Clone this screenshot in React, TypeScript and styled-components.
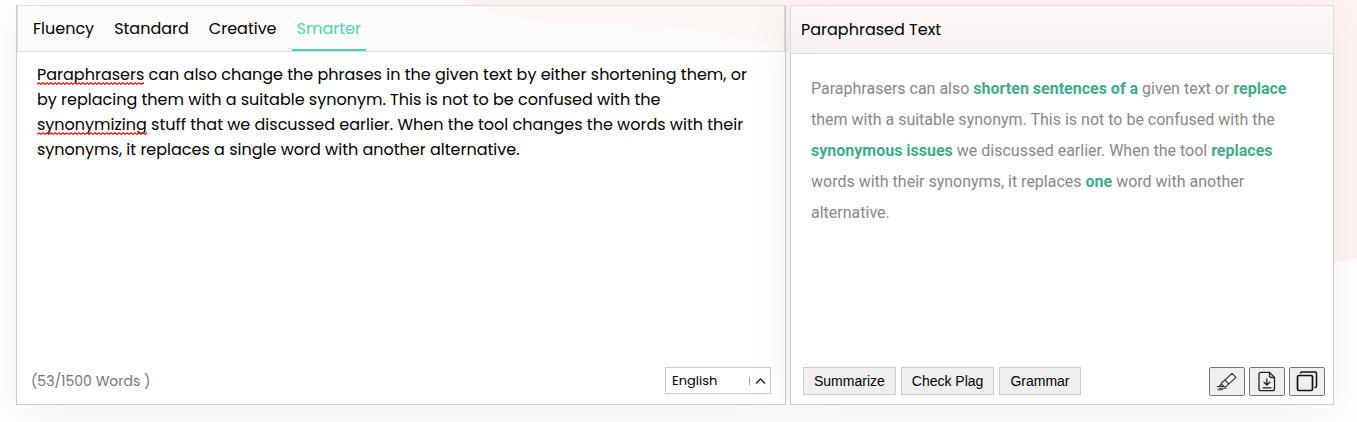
import React, { useState } from "react";
import styled, { createGlobalStyle } from "styled-components";

const GlobalStyle = createGlobalStyle`
  * { box-sizing: border-box; }
  body { margin: 0; background: #fff; color: #000; font-family: Poppins, Inter, sans-serif; }
  button, select, textarea { margin: 0; color: inherit; }
`;

const Page = styled.main`
  position: relative;
  min-height: 100vh;
  padding: 5px 23px 17px 16px;
  overflow: hidden;
`;

const Backdrop = styled.svg`
  position: absolute;
  top: 0;
  right: 0;
  width: 900px;
  height: 270px;
`;

const Workspace = styled.div`
  position: relative;
  display: grid;
  grid-template-columns: 770fr 544fr;
  gap: 4px;
  min-height: 400px;
`;

const Panel = styled.section`
  display: flex;
  flex-direction: column;
  min-width: 0;
  box-shadow: 0 10px 50px rgba(0, 0, 0, 0.06);
`;

const SourcePanel = styled(Panel)`
  border: 1px solid #c5cbdb;
  border-top: 0;
`;

const Header = styled.header`
  display: flex;
  border: 1px solid #dcdcdc;
  background: rgba(250, 248, 247, 0.6);
`;

const Tabs = styled(Header)`
  gap: 10px;
  height: 47px;
  padding-left: 10px;
`;

const Tab = styled.button<{ $active: boolean }>`
  height: 45px;
  padding: 0 5px;
  border: 0;
  border-bottom: 2px solid ${(p) => (p.$active ? "#3fd6ae" : "transparent")};
  background: none;
  color: ${(p) => (p.$active ? "#4cd6b0" : "#000")};
  font: 400 16px/45px Poppins, Inter, sans-serif;
  cursor: pointer;
`;

const ResultHeader = styled(Header)`
  align-items: center;
  height: 49px;
  padding: 0 10px;
  background: linear-gradient(rgba(250, 250, 250, 0.7), rgba(242, 242, 242, 0.7));
`;

const Title = styled.h2`
  margin: 0;
  font-size: 16px;
  font-weight: 400;
  line-height: 24px;
`;

const SourceBody = styled.div`
  display: flex;
  flex: 1;
  flex-direction: column;
  background: #fff;
`;

const ResultBody = styled.div`
  display: flex;
  flex: 1;
  flex-direction: column;
  border: 1px solid #c5cbdb;
  border-top: 0;
  background: #fff;
`;

const Editor = styled.div`
  position: relative;
  display: flex;
  flex: 1;
`;

const TextArea = styled.textarea`
  flex: 1;
  padding: 10px 20px;
  border: 0;
  background: transparent;
  font: 400 16px/25px Poppins, Inter, sans-serif;
  outline: none;
  resize: none;
`;

/* Spelling mark under the first word of a line of the editor. */
const SpellingMark = styled.svg<{ $line: number; $width: number }>`
  position: absolute;
  top: ${(p) => 30 + p.$line * 25}px;
  left: 20px;
  width: ${(p) => p.$width}px;
  height: 3px;
  pointer-events: none;
`;

const Footer = styled.footer`
  display: flex;
  align-items: center;
  justify-content: space-between;
  padding: 0 14px 10px;
`;

const ResultFooter = styled(Footer)`
  align-items: flex-start;
  padding: 0 8px 8px 12px;
`;

const WordCount = styled.span`
  color: #777;
  font-size: 14px;
  line-height: 24px;
`;

const LanguageField = styled.label`
  display: grid;
  align-items: center;
  width: 106px;
  > * { grid-area: 1 / 1; }
`;

const Language = styled.select`
  width: 100%;
  height: 27px;
  padding: 0 6px;
  border: 1px solid #ccc;
  border-radius: 0;
  background: #fff;
  font: 400 13px/20px Poppins, Inter, sans-serif;
  appearance: none;
`;

const Caret = styled.svg`
  justify-self: end;
  width: 24px;
  height: 12px;
  margin-right: 1px;
  pointer-events: none;
`;

const Result = styled.p`
  flex: 1;
  margin: 0;
  padding: 19px 20px;
  color: #888;
  font: 400 16px/31px Roboto, sans-serif;
`;

const Changed = styled.strong`
  color: #41ab8c;
  font-weight: 700;
`;

const Group = styled.div<{ $gap: number }>`
  display: flex;
  gap: ${(p) => p.$gap}px;
`;

const ActionButton = styled.button`
  height: 28px;
  padding: 0 10px;
  border: 1px solid #ccc;
  background: #efefef;
  font: 400 14px/20px Arial, "Liberation Sans", sans-serif;
  cursor: pointer;
`;

const IconButton = styled.button`
  display: flex;
  align-items: center;
  justify-content: center;
  width: 36px;
  height: 29px;
  padding: 0;
  border: 1px solid #767676;
  border-radius: 2px;
  background: #efefef;
  cursor: pointer;
  svg { width: 22px; height: 22px; }
`;

const modes = ["Fluency", "Standard", "Creative", "Smarter"];

const sample =
  "Paraphrasers can also change the phrases in the given text by either shortening them, or by replacing them with a suitable synonym. This is not to be confused with the synonymizing stuff that we discussed earlier. When the tool changes the words with their synonyms, it replaces a single word with another alternative.";

const spellingMarks = [
  { line: 0, width: 107 },
  { line: 2, width: 110 },
];

const zigzag = "M0 2.300" + "l2-1.400l2 1.400".repeat(30);

/* The pieces of the result: words that the tool changed are marked. */
const result = [
  { text: "Paraphrasers can also " },
  { text: "shorten sentences of a", changed: true },
  { text: " given text or " },
  { text: "replace", changed: true },
  { text: " them with a suitable synonym. This is not to be confused with the " },
  { text: "synonymous issues", changed: true },
  { text: " we discussed earlier. When the tool " },
  { text: "replaces", changed: true },
  { text: " words with their synonyms, it replaces " },
  { text: "one", changed: true },
  { text: " word with another alternative." },
];

const EraserIcon = () => (
  <svg viewBox="0 0 22 22" fill="none" stroke="#333" strokeWidth="1.1" strokeLinejoin="round" strokeLinecap="round" aria-hidden="true">
    <path d="M16 2.300 20 6.300 12.800 12.800 9 9Z" />
    <path d="m9 9-3.500 2.700q-.6.500 0 1.200l3 3q.7.600 1.300 0l3-3.100" />
    <path d="M5.500 12.800 3.500 14.800l4 .7M1.500 15.500h5M3 17.200h7M2 18.800h4.500" />
  </svg>
);

const DownloadIcon = () => (
  <svg viewBox="0 0 22 22" fill="none" stroke="#222" strokeWidth="1.300" strokeLinejoin="round" strokeLinecap="round" aria-hidden="true">
    <path d="M13.500 1.300H5q-2 0-2 2v14.400q0 2 2 2h11.500q2 0 2-2V6.500Z" />
    <path d="M13.500 1.300v3.700q0 1.500 1.500 1.500h3.500" />
    <path d="M10.900 8v6M8 11.200l2.900 2.900 2.900-2.900M7 16.800h8" />
  </svg>
);

const CopyIcon = () => (
  <svg viewBox="0 0 22 22" fill="none" stroke="#111" strokeWidth="1.500" strokeLinejoin="round" aria-hidden="true">
    <rect x="1.500" y="4.500" width="15" height="15" rx="1.500" strokeWidth="1.700" />
    <path d="M4.500 2.500V2q0-1 1.200-1H19q1.500 0 1.500 1.500V15q0 1.500-1.500 1.500h-.5" />
  </svg>
);

export default function App() {
  const [mode, setMode] = useState("Smarter");
  const [text, setText] = useState(sample);

  return (
    <>
      <GlobalStyle />
      <Page>
        <Backdrop viewBox="0 0 900 270" aria-hidden="true">
          <path fill="#fff4f2" d="M4 0C40 15 80 25 150 25C230 25 285 34 329 52C430 94 490 205 610 245C700 275 800 282 900 258V0Z" />
        </Backdrop>
        <Workspace>
          <SourcePanel aria-label="Source text">
            <Tabs as="nav">
              {modes.map((name) => (
                <Tab key={name} type="button" $active={name === mode} aria-pressed={name === mode} onClick={() => setMode(name)}>
                  {name}
                </Tab>
              ))}
            </Tabs>
            <SourceBody>
              <Editor>
                <TextArea aria-label="Text to paraphrase" spellCheck={false} value={text} onChange={(e) => setText(e.target.value)} />
                {text === sample &&
                  spellingMarks.map((mark) => (
                    <SpellingMark key={mark.line} $line={mark.line} $width={mark.width} aria-hidden="true">
                      <path d={zigzag} fill="none" stroke="#f01c1c" strokeWidth="1.300" />
                    </SpellingMark>
                  ))}
              </Editor>
              <Footer>
                <WordCount>(53/1500 Words )</WordCount>
                <LanguageField>
                  <Language aria-label="Language" defaultValue="English">
                    <option>English</option>
                  </Language>
                  <Caret viewBox="0 0 24 12" fill="none" aria-hidden="true">
                    <path d="M3.500 2v8" stroke="#aaa" />
                    <path d="m10 8.500 4.500-4.500L19 8.500" stroke="#222" strokeWidth="1.300" />
                  </Caret>
                </LanguageField>
              </Footer>
            </SourceBody>
          </SourcePanel>
          <Panel aria-label="Result">
            <ResultHeader>
              <Title>Paraphrased Text</Title>
            </ResultHeader>
            <ResultBody>
              <Result>
                {result.map((piece) => (piece.changed ? <Changed key={piece.text}>{piece.text}</Changed> : piece.text))}
              </Result>
              <ResultFooter>
                <Group $gap={5}>
                  <ActionButton type="button">Summarize</ActionButton>
                  <ActionButton type="button">Check Plag</ActionButton>
                  <ActionButton type="button">Grammar</ActionButton>
                </Group>
                <Group $gap={4}>
                  <IconButton type="button" aria-label="Clear"><EraserIcon /></IconButton>
                  <IconButton type="button" aria-label="Download"><DownloadIcon /></IconButton>
                  <IconButton type="button" aria-label="Copy"><CopyIcon /></IconButton>
                </Group>
              </ResultFooter>
            </ResultBody>
          </Panel>
        </Workspace>
      </Page>
    </>
  );
}
